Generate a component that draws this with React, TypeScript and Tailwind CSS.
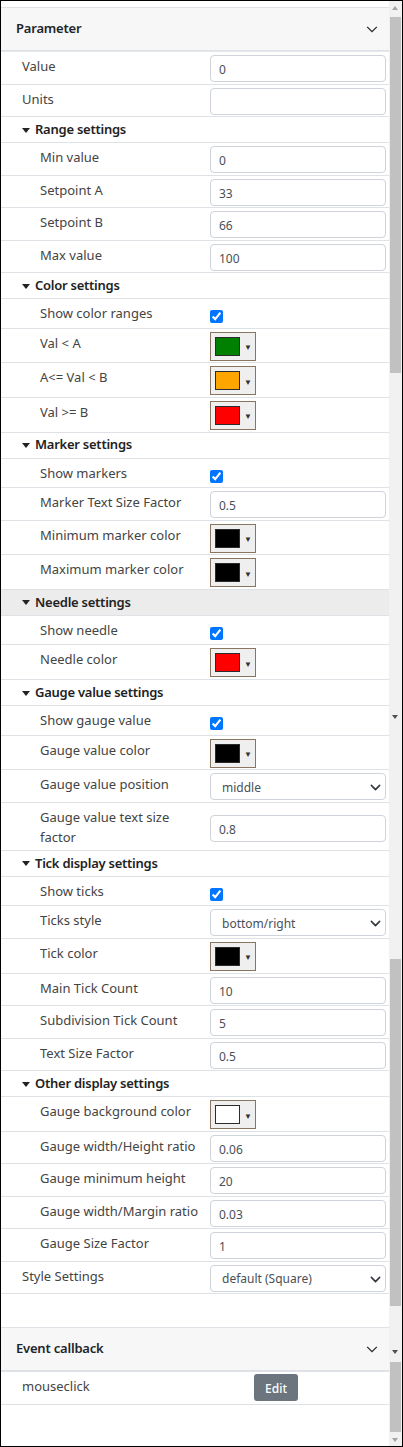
import type { ReactNode } from 'react';

type Row =
  | { kind: 'header'; label: string; hover?: boolean }
  | { kind: 'input'; label: string; value: string; nested?: boolean }
  | { kind: 'select'; label: string; value: string; nested?: boolean }
  | { kind: 'check'; label: string }
  | { kind: 'color'; label: string; color: string }
  | { kind: 'tall'; label: string; value: string };

const rows: Row[] = [
  { kind: 'input', label: 'Value', value: '0' },
  { kind: 'input', label: 'Units', value: '' },
  { kind: 'header', label: 'Range settings' },
  { kind: 'input', label: 'Min value', value: '0', nested: true },
  { kind: 'input', label: 'Setpoint A', value: '33', nested: true },
  { kind: 'input', label: 'Setpoint B', value: '66', nested: true },
  { kind: 'input', label: 'Max value', value: '100', nested: true },
  { kind: 'header', label: 'Color settings' },
  { kind: 'check', label: 'Show color ranges' },
  { kind: 'color', label: 'Val < A', color: '#008000' },
  { kind: 'color', label: 'A<= Val < B', color: '#ffa500' },
  { kind: 'color', label: 'Val >= B', color: '#ff0000' },
  { kind: 'header', label: 'Marker settings' },
  { kind: 'check', label: 'Show markers' },
  { kind: 'input', label: 'Marker Text Size Factor', value: '0.5', nested: true },
  { kind: 'color', label: 'Minimum marker color', color: '#000000' },
  { kind: 'color', label: 'Maximum marker color', color: '#000000' },
  { kind: 'header', label: 'Needle settings', hover: true },
  { kind: 'check', label: 'Show needle' },
  { kind: 'color', label: 'Needle color', color: '#ff0000' },
  { kind: 'header', label: 'Gauge value settings' },
  { kind: 'check', label: 'Show gauge value' },
  { kind: 'color', label: 'Gauge value color', color: '#000000' },
  { kind: 'select', label: 'Gauge value position', value: 'middle', nested: true },
  { kind: 'tall', label: 'Gauge value text size factor', value: '0.8' },
  { kind: 'header', label: 'Tick display settings' },
  { kind: 'check', label: 'Show ticks' },
  { kind: 'select', label: 'Ticks style', value: 'bottom/right', nested: true },
  { kind: 'color', label: 'Tick color', color: '#000000' },
  { kind: 'input', label: 'Main Tick Count', value: '10', nested: true },
  { kind: 'input', label: 'Subdivision Tick Count', value: '5', nested: true },
  { kind: 'input', label: 'Text Size Factor', value: '0.5', nested: true },
  { kind: 'header', label: 'Other display settings' },
  { kind: 'color', label: 'Gauge background color', color: '#ffffff' },
  { kind: 'input', label: 'Gauge width/Height ratio', value: '0.06', nested: true },
  { kind: 'input', label: 'Gauge minimum height', value: '20', nested: true },
  { kind: 'input', label: 'Gauge width/Margin ratio', value: '0.03', nested: true },
  { kind: 'input', label: 'Gauge Size Factor', value: '1', nested: true },
  { kind: 'select', label: 'Style Settings', value: 'default (Square)' }
];

function Chevron() {
  return (
    <svg width="14" height="14" viewBox="0 0 16 16" fill="none" stroke="#212529" strokeWidth="1.4">
      <path d="M2.5 5.5 8 11l5.5-5.5" />
    </svg>
  );
}

function SelectArrow() {
  return (
    <svg width="11" height="11" viewBox="0 0 16 16" fill="none" stroke="#343a40" strokeWidth="2.4" strokeLinecap="round" strokeLinejoin="round">
      <path d="m2 5 6 6 6-6" />
    </svg>
  );
}

function TextBox({ value }: { value: string }) {
  return (
    <div className="flex h-[27px] w-[176px] items-center rounded-[4px] border border-[#ced4da] bg-white pl-[8px] pt-[3px] text-[12px] text-[#495057]">
      {value}
    </div>
  );
}

function SelectBox({ value }: { value: string }) {
  return (
    <div className="flex h-[27px] w-[176px] items-center justify-between rounded-[4px] border border-[#ced4da] bg-white pl-[11px] pr-[4px] pt-[2px] text-[12px] text-[#495057]">
      <span>{value}</span>
      <SelectArrow />
    </div>
  );
}

function ColorBox({ color }: { color: string }) {
  return (
    <div className="flex h-[29px] w-[46px] items-center border border-[#8a7560] bg-[#efefef] pl-[4px]">
      <div className="h-[19px] w-[25px] border border-[#2b2b2b]" style={{ backgroundColor: color }} />
      <span className="ml-[4px] mt-[2px] text-[8px] leading-none text-[#333]">▼</span>
    </div>
  );
}

function Line({ h, pl, label, children }: { h: string; pl: string; label: ReactNode; children?: ReactNode }) {
  return (
    <div className={`flex border-b border-[#dee2e6] ${h}`}>
      <div className={`w-[209px] shrink-0 pr-[7px] pt-[4px] text-[13px] leading-[20px] text-[#444] ${pl}`}>{label}</div>
      <div className="pt-[3px]">{children}</div>
    </div>
  );
}

function RowView({ row }: { row: Row }) {
  if (row.kind === 'header') {
    return (
      <div
        className={`flex h-[26px] items-center gap-[5px] border-b border-[#dee2e6] pl-[21px] text-[13px] font-semibold tracking-[-0.25px] text-[#222] ${
          row.hover ? 'bg-[#ececec]' : ''
        }`}
      >
        <svg width="8" height="5" viewBox="0 0 8 5" className="mt-[1px]">
          <path d="M0 0h8L4 5z" fill="#222" />
        </svg>
        <span>{row.label}</span>
      </div>
    );
  }
  if (row.kind === 'input') {
    return (
      <Line h="h-[32.5px]" pl={row.nested ? 'pl-[39px]' : 'pl-[21px]'} label={row.label}>
        <TextBox value={row.value} />
      </Line>
    );
  }
  if (row.kind === 'select') {
    return (
      <Line h="h-[32.5px]" pl={row.nested ? 'pl-[39px]' : 'pl-[21px]'} label={row.label}>
        <SelectBox value={row.value} />
      </Line>
    );
  }
  if (row.kind === 'check') {
    return (
      <Line h="h-[29.5px]" pl="pl-[39px]" label={row.label}>
        <input type="checkbox" defaultChecked className="m-0 mt-[8px] block h-[13px] w-[13px]" />
      </Line>
    );
  }
  if (row.kind === 'color') {
    return (
      <Line h="h-[34.7px]" pl="pl-[39px]" label={row.label}>
        <ColorBox color={row.color} />
      </Line>
    );
  }
  return (
    <Line h="h-[48px]" pl="pl-[39px]" label={row.label}>
      <div className="pt-[9px]">
        <TextBox value={row.value} />
      </div>
    </Line>
  );
}

function Scrollbar() {
  const arrow = 'absolute left-[3px] h-0 w-0 border-x-[3.5px] border-x-transparent';
  return (
    <div className="relative h-full w-[13px] shrink-0 bg-[#f1f1f1]">
      <div className={`${arrow} top-[5px] border-b-[4px] border-b-[#a3a3a3]`} />
      <div className="absolute left-[1px] top-[16px] h-[356px] w-[11px] bg-[#c1c1c1]" />
      <div className={`${arrow} top-[714px] border-t-[4px] border-t-[#505050]`} />
      <div className="absolute left-[1px] top-[958px] h-[347px] w-[11px] bg-[#c1c1c1]" />
      <div className={`${arrow} top-[1349px] border-t-[4px] border-t-[#505050]`} />
      <div className="absolute left-[1px] top-[1361px] h-[70px] w-[11px] bg-[#c1c1c1]" />
      <div className={`${arrow} top-[1437px] border-t-[4px] border-t-[#a3a3a3]`} />
    </div>
  );
}

export default function App() {
  return (
    <div
      className="flex h-[1447px] w-[403px] overflow-hidden border border-black bg-white text-[#212529]"
      style={{ fontFamily: '"Noto Sans", "Open Sans", sans-serif' }}
    >
      <div className="w-[388px] shrink-0">
        <div className="h-[6px]" />
        <div className="flex h-[44px] items-center justify-between border-y border-[#dee2e6] bg-[#f7f7f7] pl-[15px] pr-[10px] text-[13px] font-semibold tracking-[-0.2px]">
          <span>Parameter</span>
          <Chevron />
        </div>
        <div className="border-t border-[#e6e9ec]" />
        {rows.map((row) => (
          <RowView key={row.label} row={row} />
        ))}
        <div className="h-[34px] border-b border-[#dee2e6]" />
        <div className="flex h-[44px] items-center justify-between border-b-2 border-[#dee2e6] bg-[#f7f7f7] pl-[15px] pr-[10px] text-[13px] font-semibold tracking-[-0.2px]">
          <span>Event callback</span>
          <Chevron />
        </div>
        <div className="flex h-[33px] border-b border-[#dee2e6]">
          <div className="w-[253px] shrink-0 pl-[21px] pt-[4px] text-[13px] leading-[20px] text-[#444]">mouseclick</div>
          <button
            type="button"
            className="mt-[2px] h-[27px] w-[44px] rounded-[3px] bg-[#6c757d] pt-[2px] text-[12px] font-medium text-white"
          >
            Edit
          </button>
        </div>
      </div>
      <Scrollbar />
    </div>
  );
}
